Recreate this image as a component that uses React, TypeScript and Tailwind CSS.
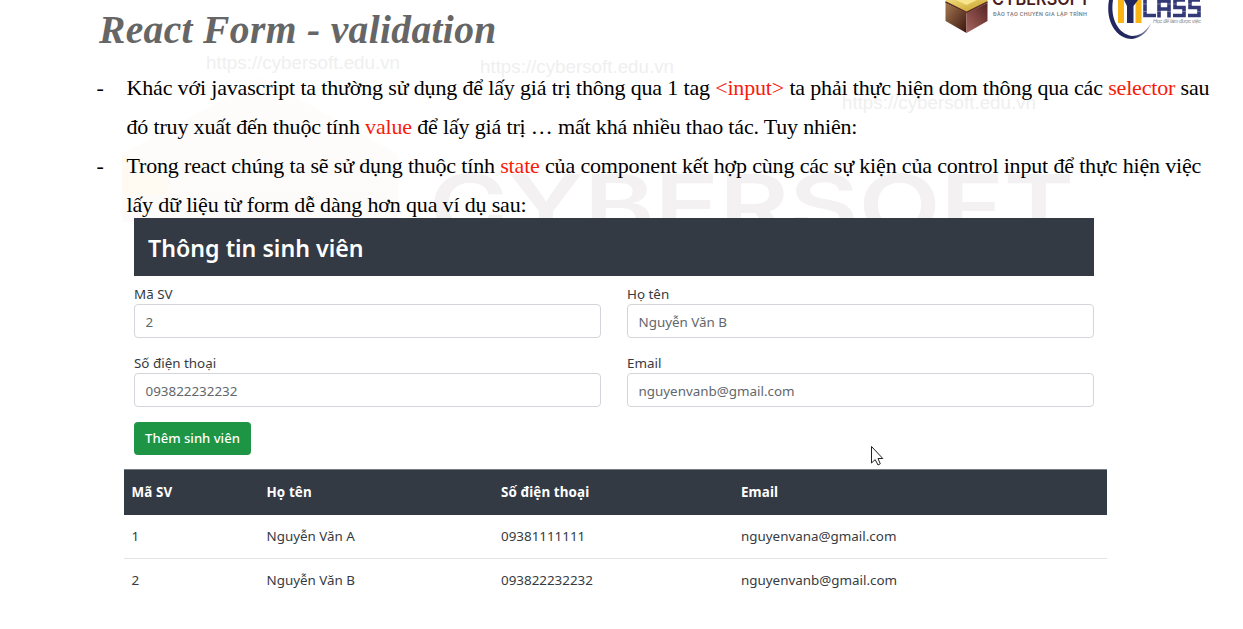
import React from "react";

const Red = ({ children }: { children: React.ReactNode }) => <span className="text-[#f81b0c]">{children}</span>;

const fields = [
  { label: "Mã SV", value: "2" },
  { label: "Họ tên", value: "Nguyễn Văn B" },
  { label: "Số điện thoại", value: "093822232232" },
  { label: "Email", value: "nguyenvanb@gmail.com" },
];

const rows = [
  ["1", "Nguyễn Văn A", "09381111111", "nguyenvana@gmail.com"],
  ["2", "Nguyễn Văn B", "093822232232", "nguyenvanb@gmail.com"],
];

function Watermark() {
  return (
    <svg className="absolute inset-0 -z-10" width="1243" height="629" viewBox="0 0 1243 629">
      <defs>
        <linearGradient id="cream" x1="0" y1="0" x2="0" y2="1">
          <stop offset="0" stopColor="#fefdfc" />
          <stop offset="1" stopColor="#fcfbf9" />
        </linearGradient>
      </defs>
      <path d="M262 78 L398 154 V222 H122 V154 Z" fill="url(#cream)" />
      <path d="M122 154 L168 180 V195 H122 Z" fill="#fffaf2" />
      <g fontFamily="'Liberation Sans', sans-serif" fontSize="18" fill="#efefef">
        <text x="206" y="69" textLength="194" lengthAdjust="spacingAndGlyphs">https://cybersoft.edu.vn</text>
        <text x="480" y="73" textLength="194" lengthAdjust="spacingAndGlyphs">https://cybersoft.edu.vn</text>
        <text x="842" y="109" textLength="194" lengthAdjust="spacingAndGlyphs">https://cybersoft.edu.vn</text>
      </g>
      <text x="429" y="235" fontFamily="Inter, sans-serif" fontWeight="600" fontSize="84" fill="#f3f1f2" textLength="645" lengthAdjust="spacingAndGlyphs">CYBERSOFT</text>
    </svg>
  );
}

function Logos() {
  return (
    <svg className="absolute left-[940px] top-0" width="270" height="45" viewBox="940 0 270 45">
      <defs>
        <linearGradient id="left" x1="0" y1="0" x2="1" y2="1">
          <stop offset="0" stopColor="#a4794f" />
          <stop offset="1" stopColor="#3a1410" />
        </linearGradient>
        <linearGradient id="right" x1="0" y1="1" x2="1" y2="0">
          <stop offset="0" stopColor="#a86560" />
          <stop offset="1" stopColor="#562422" />
        </linearGradient>
        <linearGradient id="top" x1="0" y1="0" x2="1" y2="1">
          <stop offset="0" stopColor="#f0da78" />
          <stop offset="1" stopColor="#c39a24" />
        </linearGradient>
        <linearGradient id="swoosh" x1="0" y1="0" x2="1" y2="0">
          <stop offset="0.6" stopColor="#22285f" />
          <stop offset="1" stopColor="#a9abc0" />
        </linearGradient>
      </defs>
      <path d="M945.500 0 H987.500 V2.500 L966.500 13 L945.500 3 Z" fill="url(#top)" />
      <path d="M956 0 H977 L966.500 5 Z" fill="#f6e58c" />
      <path d="M945.500 3 L966.500 13 V33 L945.500 21 Z" fill="url(#left)" />
      <path d="M987.500 3 L966.500 13 V33 L987.500 21 Z" fill="url(#right)" />
      <path d="M945.500 2 L966.500 12.500 L987.500 2" fill="none" stroke="#5a2a22" strokeWidth="1.500" />
      <text x="992" y="5" fontFamily="Inter, sans-serif" fontSize="17" fontWeight="600" fill="#4a1c1c" textLength="98" lengthAdjust="spacingAndGlyphs">CYBERSOFT</text>
      <text x="993" y="16" fontFamily="Roboto, sans-serif" fontSize="5.500" fontWeight="500" fill="#777777" textLength="94">ĐÀO TẠO CHUYÊN GIA LẬP TRÌNH</text>
      <path d="M1109 0 C1105 22 1117 39 1132 39 C1142 38 1149 30 1151 23 C1146 32 1139 36 1132 36 C1118 34 1110 18 1113 0 Z" fill="url(#swoosh)" />
      <path d="M1118 0 H1124 V23 H1118 Z M1135.500 0 H1141.500 V23 H1135.500 Z" fill="#fcb414" />
      <path d="M1124 0 H1138 L1133.500 6 V23 H1127 V6 Z" fill="#22285f" />
      <g fill="none" stroke="#343a78" strokeWidth="3.600">
        <path d="M1145 0 V15.500 H1156" />
        <path d="M1159 17.500 V1 H1169 V17.500 M1159 9 H1169" />
        <path d="M1185 0 H1175 V7.500 H1184 V15.500 H1173" />
        <path d="M1200 0 H1190 V7.500 H1199 V15.500 H1188" />
      </g>
      <path d="M1143 4 H1202 M1143 11.500 H1202" stroke="white" strokeWidth="0.600" opacity="0.500" />
      <text x="1153" y="23" fontFamily="'Liberation Sans', sans-serif" fontSize="5.500" fontStyle="italic" fill="#888888" textLength="48">Học để làm được việc</text>
    </svg>
  );
}

export default function App() {
  return (
    <main className="relative isolate h-[629px] w-[1243px] overflow-hidden bg-white font-['Noto_Sans','Open_Sans',sans-serif] text-[13.4px] text-[#363b42]">
      <Watermark />
      <Logos />
      <h1 className="h-[68px] pl-[99px] pt-[7px] font-['Liberation_Serif',serif] text-[39.5px] leading-[46px] font-bold tracking-[0.35px] text-[#666666] italic">React Form - validation</h1>
      <ul className="h-[150px] pl-[96.500px] font-['Liberation_Serif',serif] text-[22px] leading-[39px] tracking-[-0.165px] whitespace-nowrap text-black">
        <li className="flex">
          <span className="w-[30px]">-</span>
          <div>
            <p className="w-max">Khác với javascript ta thường sử dụng để lấy giá trị thông qua 1 tag <Red>&lt;input&gt;</Red> ta phải thực hiện dom thông qua các <Red>selector</Red> sau</p>
            <p className="w-max">đó truy xuất đến thuộc tính <Red>value</Red> để lấy giá trị … mất khá nhiều thao tác. Tuy nhiên:</p>
          </div>
        </li>
        <li className="flex">
          <span className="w-[30px]">-</span>
          <div>
            <p className="w-max">Trong react chúng ta sẽ sử dụng thuộc tính <Red>state</Red> của component kết hợp cùng các sự kiện của control input để thực hiện việc</p>
            <p className="w-max">lấy dữ liệu từ form dễ dàng hơn qua ví dụ sau:</p>
          </div>
        </li>
      </ul>
      <section className="ml-[134px] h-[251px] w-[960px]">
        <h2 className="h-[58px] bg-[#343a44] pl-[14px] font-['Noto_Sans',sans-serif] text-[23.2px] leading-[60px] font-semibold text-white">Thông tin sinh viên</h2>
        <div className="grid grid-cols-2 gap-x-[26px] pt-[9px]">
          {fields.map((f) => (
            <label key={f.label} className="block h-[69.400px]">
              <span className="block h-[19px] leading-[19px]">{f.label}</span>
              <input readOnly value={f.value} className="block h-[34px] w-full rounded-[4px] border border-[#d2d5d9] bg-white px-[10.500px] pt-[2px] text-[#62676d] outline-none" />
            </label>
          ))}
        </div>
        <button className="-mt-[2px] block h-[33.500px] w-[117px] rounded-[4px] bg-[#1e9445] pt-[1px] text-center text-[13.1px] font-medium whitespace-nowrap text-white">Thêm sinh viên</button>
      </section>
      <table className="ml-[124px] w-[983px] table-fixed border-collapse text-left">
        <colgroup>
          <col className="w-[135px]" />
          <col className="w-[234.500px]" />
          <col className="w-[240px]" />
          <col />
        </colgroup>
        <thead className="bg-[#343a44] text-white">
          <tr className="h-[45px] border-t border-[#777b82]">
            {["Mã SV", "Họ tên", "Số điện thoại", "Email"].map((h) => (
              <th key={h} className="px-[7.500px] py-0 font-bold tracking-[0.1px]">{h}</th>
            ))}
          </tr>
        </thead>
        <tbody>
          {rows.map((r) => (
            <tr key={r[0]} className="h-[43.500px] border-b border-[#e2e4e7] last:border-0">
              {r.map((c) => (
                <td key={c} className="px-[7.500px] py-0">{c}</td>
              ))}
            </tr>
          ))}
        </tbody>
      </table>
      <svg className="absolute left-[870px] top-[445px]" width="15" height="22" viewBox="0 0 15 22">
        <path d="M1.500 1.500 V18 L5.200 14.600 L8 20 L10.300 18.800 L8 13.500 H12.800 Z" fill="white" stroke="#222222" strokeWidth="1" />
      </svg>
    </main>
  );
}
